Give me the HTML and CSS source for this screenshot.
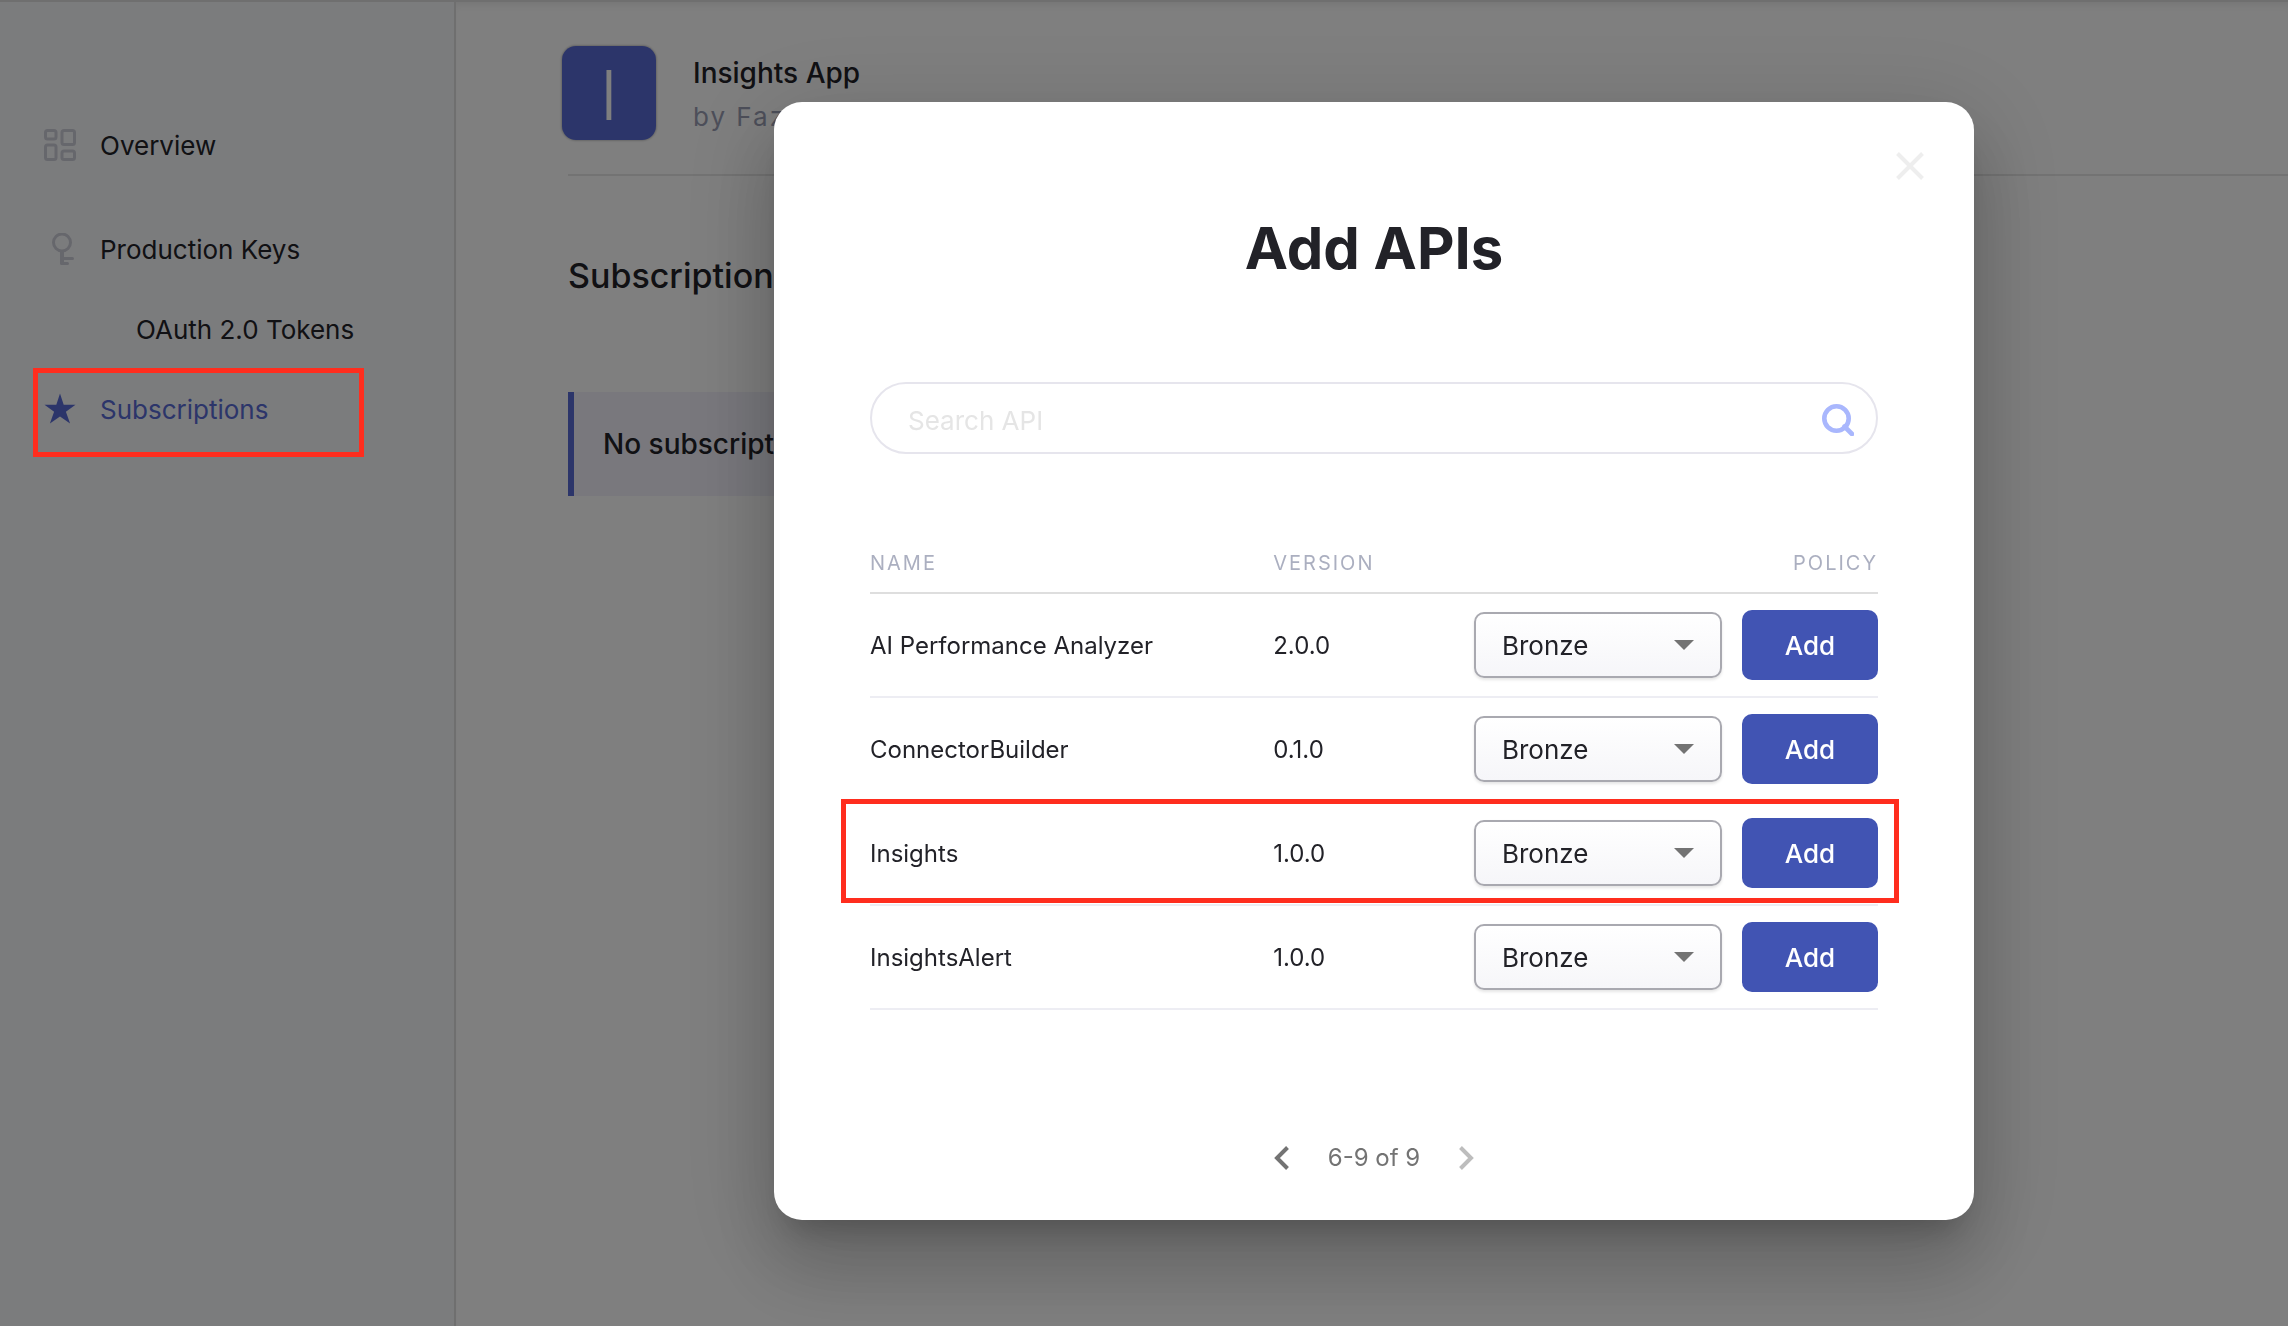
FILE: index.html
```html
<!DOCTYPE html>
<html lang="en">
<head>
<meta charset="utf-8">
<title>Insights App - Subscriptions</title>
<link rel="stylesheet" href="styles.css">
</head>
<body>
<div class="page">
  <nav class="sidebar" aria-label="Application">
    <ul class="menu">
      <li class="menu-item menu-item-first">
        <a href="#overview">
          <svg class="menu-icon" viewBox="0 0 32 32" fill="none" stroke="#cdced8" stroke-width="3"><rect x="1.500" y="1.500" width="10.500" height="8.500" rx="2"/><rect x="18" y="1.500" width="12.500" height="14" rx="2"/><rect x="1.500" y="16" width="10.500" height="14.500" rx="2"/><rect x="18" y="22" width="12.500" height="8.500" rx="2"/></svg>
          Overview
        </a>
      </li>
      <li class="menu-item">
        <a href="#production-keys">
          <svg class="menu-icon" viewBox="0 0 32 32" fill="none" stroke="#cdced8" stroke-width="3" stroke-linecap="round"><circle cx="18" cy="9.500" r="8.500"/><path d="M18 18v13" stroke-width="4" stroke-linecap="butt"/><path d="M18 25.500h10.500M17.500 30.500h6"/></svg>
          Production Keys
        </a>
      </li>
      <li class="menu-item menu-item-nested"><a href="#oauth-tokens">OAuth 2.0 Tokens</a></li>
      <li class="menu-item menu-item-active">
        <a href="#subscriptions" aria-current="page">
          <svg class="menu-icon" viewBox="0 0 32 32" fill="#586bd4"><path d="M16 0.500l3.700 11.200h11.800l-9.600 7 4.200 11.800L16 23.500 5.900 30.500l4.200-11.800-9.600-7h11.800z"/></svg>
          Subscriptions
        </a>
        <span class="highlight highlight-menu"></span>
      </li>
    </ul>
  </nav>

  <main class="content">
    <header class="app-header">
      <span class="app-logo" aria-hidden="true">I</span>
      <div>
        <h1 class="app-name">Insights App</h1>
        <p class="app-owner">by Faz</p>
      </div>
    </header>
    <section class="subscriptions">
      <h2 class="section-title">Subscriptions</h2>
      <p class="notice">No subscriptions</p>
    </section>
  </main>
</div>

<div class="overlay">
  <div class="dialog" role="dialog" aria-modal="true" aria-labelledby="dialog-title">
    <button class="close" type="button" aria-label="Close">
      <svg viewBox="0 0 28 28" fill="none" stroke="#eeeeee" stroke-width="4"><path d="M1.500 1.500l25 25M26.500 1.500l-25 25"/></svg>
    </button>
    <h2 class="dialog-title" id="dialog-title">Add APIs</h2>

    <form class="search" role="search">
      <input class="search-input" type="text" placeholder="Search API" aria-label="Search API">
      <button class="search-button" type="submit" aria-label="Search">
        <svg viewBox="0 0 32 32" fill="none" stroke="#a9b7fd" stroke-width="4.600"><circle cx="14.500" cy="14.500" r="12.200"/><path d="M22.500 22.500l7.500 7.500" stroke-linecap="round"/></svg>
      </button>
    </form>

    <table class="apis">
      <thead>
        <tr><th class="col-name" scope="col">NAME</th><th class="col-version" scope="col">VERSION</th><th class="col-policy" scope="col">POLICY</th></tr>
      </thead>
      <tbody>
        <tr>
          <td>AI Performance Analyzer</td>
          <td>2.0.0</td>
          <td><div class="actions">
            <span class="policy"><select aria-label="Policy for AI Performance Analyzer"><option>Bronze</option></select><svg class="caret" viewBox="0 0 20 10"><path d="M0 0h20L10 10z" fill="#737373"/></svg></span>
            <button class="add" type="button">Add</button>
          </div></td>
        </tr>
        <tr>
          <td>ConnectorBuilder</td>
          <td>0.1.0</td>
          <td><div class="actions">
            <span class="policy"><select aria-label="Policy for ConnectorBuilder"><option>Bronze</option></select><svg class="caret" viewBox="0 0 20 10"><path d="M0 0h20L10 10z" fill="#737373"/></svg></span>
            <button class="add" type="button">Add</button>
          </div></td>
        </tr>
        <tr class="row-highlighted">
          <td>Insights<span class="highlight highlight-row"></span></td>
          <td>1.0.0</td>
          <td><div class="actions">
            <span class="policy"><select aria-label="Policy for Insights"><option>Bronze</option></select><svg class="caret" viewBox="0 0 20 10"><path d="M0 0h20L10 10z" fill="#737373"/></svg></span>
            <button class="add" type="button">Add</button>
          </div></td>
        </tr>
        <tr>
          <td>InsightsAlert</td>
          <td>1.0.0</td>
          <td><div class="actions">
            <span class="policy"><select aria-label="Policy for InsightsAlert"><option>Bronze</option></select><svg class="caret" viewBox="0 0 20 10"><path d="M0 0h20L10 10z" fill="#737373"/></svg></span>
            <button class="add" type="button">Add</button>
          </div></td>
        </tr>
      </tbody>
    </table>

    <div class="pagination">
      <button class="page-button" type="button" aria-label="Previous page">
        <svg viewBox="0 0 16 24" fill="none" stroke="#737373" stroke-width="4"><path d="M13.500 1.500L3 12l10.500 10.500"/></svg>
      </button>
      <span>6-9 of 9</span>
      <button class="page-button" type="button" aria-label="Next page" disabled>
        <svg viewBox="0 0 16 24" fill="none" stroke="#bdbdbd" stroke-width="4"><path d="M2.500 1.500L13 12 2.500 22.500"/></svg>
      </button>
    </div>
  </div>
</div>
</body>
</html>
```
FILE: styles.css
```css
* {
  box-sizing: border-box;
}

body {
  margin: 0;
  font-family: Inter, "Liberation Sans", sans-serif;
  font-size: 24px;
  color: #222228;
  background: #fff;
}

h1, h2, p, ul {
  margin: 0;
  padding: 0;
}

button {
  padding: 0;
  border: 0;
  background: none;
  font: inherit;
  cursor: pointer;
}

svg {
  display: block;
}

/* Page behind the dialog */

.page {
  display: flex;
  min-height: 100vh;
  border-top: 2px solid #dedede;
}

.sidebar {
  flex: none;
  width: 456px;
  padding-top: 103px;
  border-right: 2px solid #dedede;
  background: #f7f8fb;
}

.menu {
  list-style: none;
}

.menu-item {
  position: relative;
  padding-left: 44px;
  font-size: 26px;
}

.menu-item-first {
  margin-bottom: 24px;
}

.menu-item a {
  display: flex;
  align-items: center;
  gap: 24px;
  height: 80px;
  color: inherit;
  text-decoration: none;
}

.menu-item-nested {
  padding-left: 136px;
}

.menu-item-active {
  color: #586bd4;
}

.menu-icon {
  width: 32px;
  height: 32px;
}

.content {
  flex: 1;
  padding-top: 44px;
  box-shadow: inset 0 8px 12px -8px rgba(0, 0, 0, 0.12);
}

.app-header {
  display: flex;
  gap: 37px;
  margin-left: 112px;
  padding-bottom: 34px;
  border-bottom: 2px solid #e6e6e6;
}

.app-logo {
  width: 94px;
  height: 94px;
  margin-left: -6px;
  border-radius: 14px;
  background: #586bd4;
  box-shadow: 0 0 2px 1px rgba(0, 0, 0, 0.2);
  color: #fff;
  font-size: 68px;
  font-weight: 300;
  line-height: 98px;
  text-align: center;
}

.app-name {
  margin-top: 9px;
  font-size: 28px;
  font-weight: 500;
  line-height: 36px;
}

.app-owner {
  margin-top: 8px;
  font-size: 26px;
  line-height: 36px;
  letter-spacing: 2px;
  color: #9a9eb4;
}

.subscriptions {
  margin-left: 112px;
}

.section-title {
  padding: 80px 0 96px;
  font-size: 34px;
  font-weight: 500;
  line-height: 40px;
}

.notice {
  max-width: 1000px;
  padding: 32px 29px;
  border-left: 6px solid #586bd4;
  background: #f2f1fb;
  font-size: 28px;
  font-weight: 500;
  line-height: 40px;
}

/* Dialog */

.overlay {
  position: fixed;
  inset: 0;
  z-index: 10;
  display: flex;
  align-items: center;
  justify-content: center;
  padding: 0 0 4px 460px;
  background: rgba(0, 0, 0, 0.5);
}

.dialog {
  position: relative;
  width: 1200px;
  max-width: 100%;
  padding: 112px 96px 46px;
  border-radius: 28px;
  background: #fff;
  box-shadow:
    0 22px 30px -14px rgba(0, 0, 0, 0.2),
    0 48px 76px 6px rgba(0, 0, 0, 0.14),
    0 18px 92px 16px rgba(0, 0, 0, 0.12);
}

.close {
  position: absolute;
  top: 50px;
  right: 50px;
}

.close svg {
  width: 28px;
  height: 28px;
}

.dialog-title {
  font-size: 58px;
  font-weight: 700;
  line-height: 68px;
  text-align: center;
}

.search {
  display: flex;
  align-items: center;
  height: 72px;
  margin-top: 100px;
  padding: 0 22px 0 36px;
  border: 2px solid #e6e5ed;
  border-radius: 36px;
}

.search-input {
  flex: 1;
  min-width: 0;
  padding: 4px 0 0;
  border: 0;
  outline: 0;
  background: none;
  font: inherit;
  font-size: 26px;
}

.search-input::placeholder {
  color: #e5e5e5;
}

.search-button {
  padding-top: 4px;
}

.search-button svg {
  width: 32px;
  height: 32px;
}

.apis {
  width: 100%;
  margin-top: 80px;
  border-collapse: separate;
  border-spacing: 0;
  table-layout: fixed;
}

.apis th {
  padding: 17px 0;
  border-bottom: 2px solid #dedede;
  font-size: 20px;
  font-weight: 400;
  line-height: 24px;
  letter-spacing: 2px;
  text-align: left;
  color: #abafc0;
}

.apis .col-name {
  width: 40%;
}

.apis .col-version {
  width: 19%;
}

.apis .col-policy {
  text-align: right;
}

.apis td {
  height: 104px;
  padding: 0;
  border-bottom: 2px solid #ededf3;
}

.row-highlighted {
  position: relative;
}

.actions {
  display: flex;
  align-items: center;
  justify-content: flex-end;
  gap: 20px;
}

.policy {
  position: relative;
}

.policy select {
  display: block;
  width: 248px;
  height: 66px;
  padding: 0 26px;
  border: 2px solid #a9a9b0;
  border-radius: 10px;
  appearance: none;
  background: linear-gradient(#fff, #f6f6f9);
  box-shadow: 0 2px 3px rgba(0, 0, 0, 0.1);
  color: #222228;
  font: inherit;
  font-size: 26px;
}

.caret {
  position: absolute;
  top: 28px;
  right: 28px;
  width: 20px;
  height: 10px;
  pointer-events: none;
}

.add {
  width: 136px;
  height: 70px;
  border-radius: 10px;
  background: #4154b3;
  color: #fff;
  font-size: 26px;
  font-weight: 500;
}

.pagination {
  display: flex;
  align-items: center;
  justify-content: center;
  gap: 38px;
  margin-top: 132px;
  line-height: 32px;
  color: #737373;
}

.page-button svg {
  width: 16px;
  height: 24px;
}

/* Red frames that point out the steps */

.highlight {
  position: absolute;
  z-index: 20;
  border: 5px solid #ff2d1e;
  pointer-events: none;
}

.highlight-menu {
  inset: -1px 90px -8px 33px;
}

.highlight-row {
  inset: -3px -21px 3px -29px;
}
```
